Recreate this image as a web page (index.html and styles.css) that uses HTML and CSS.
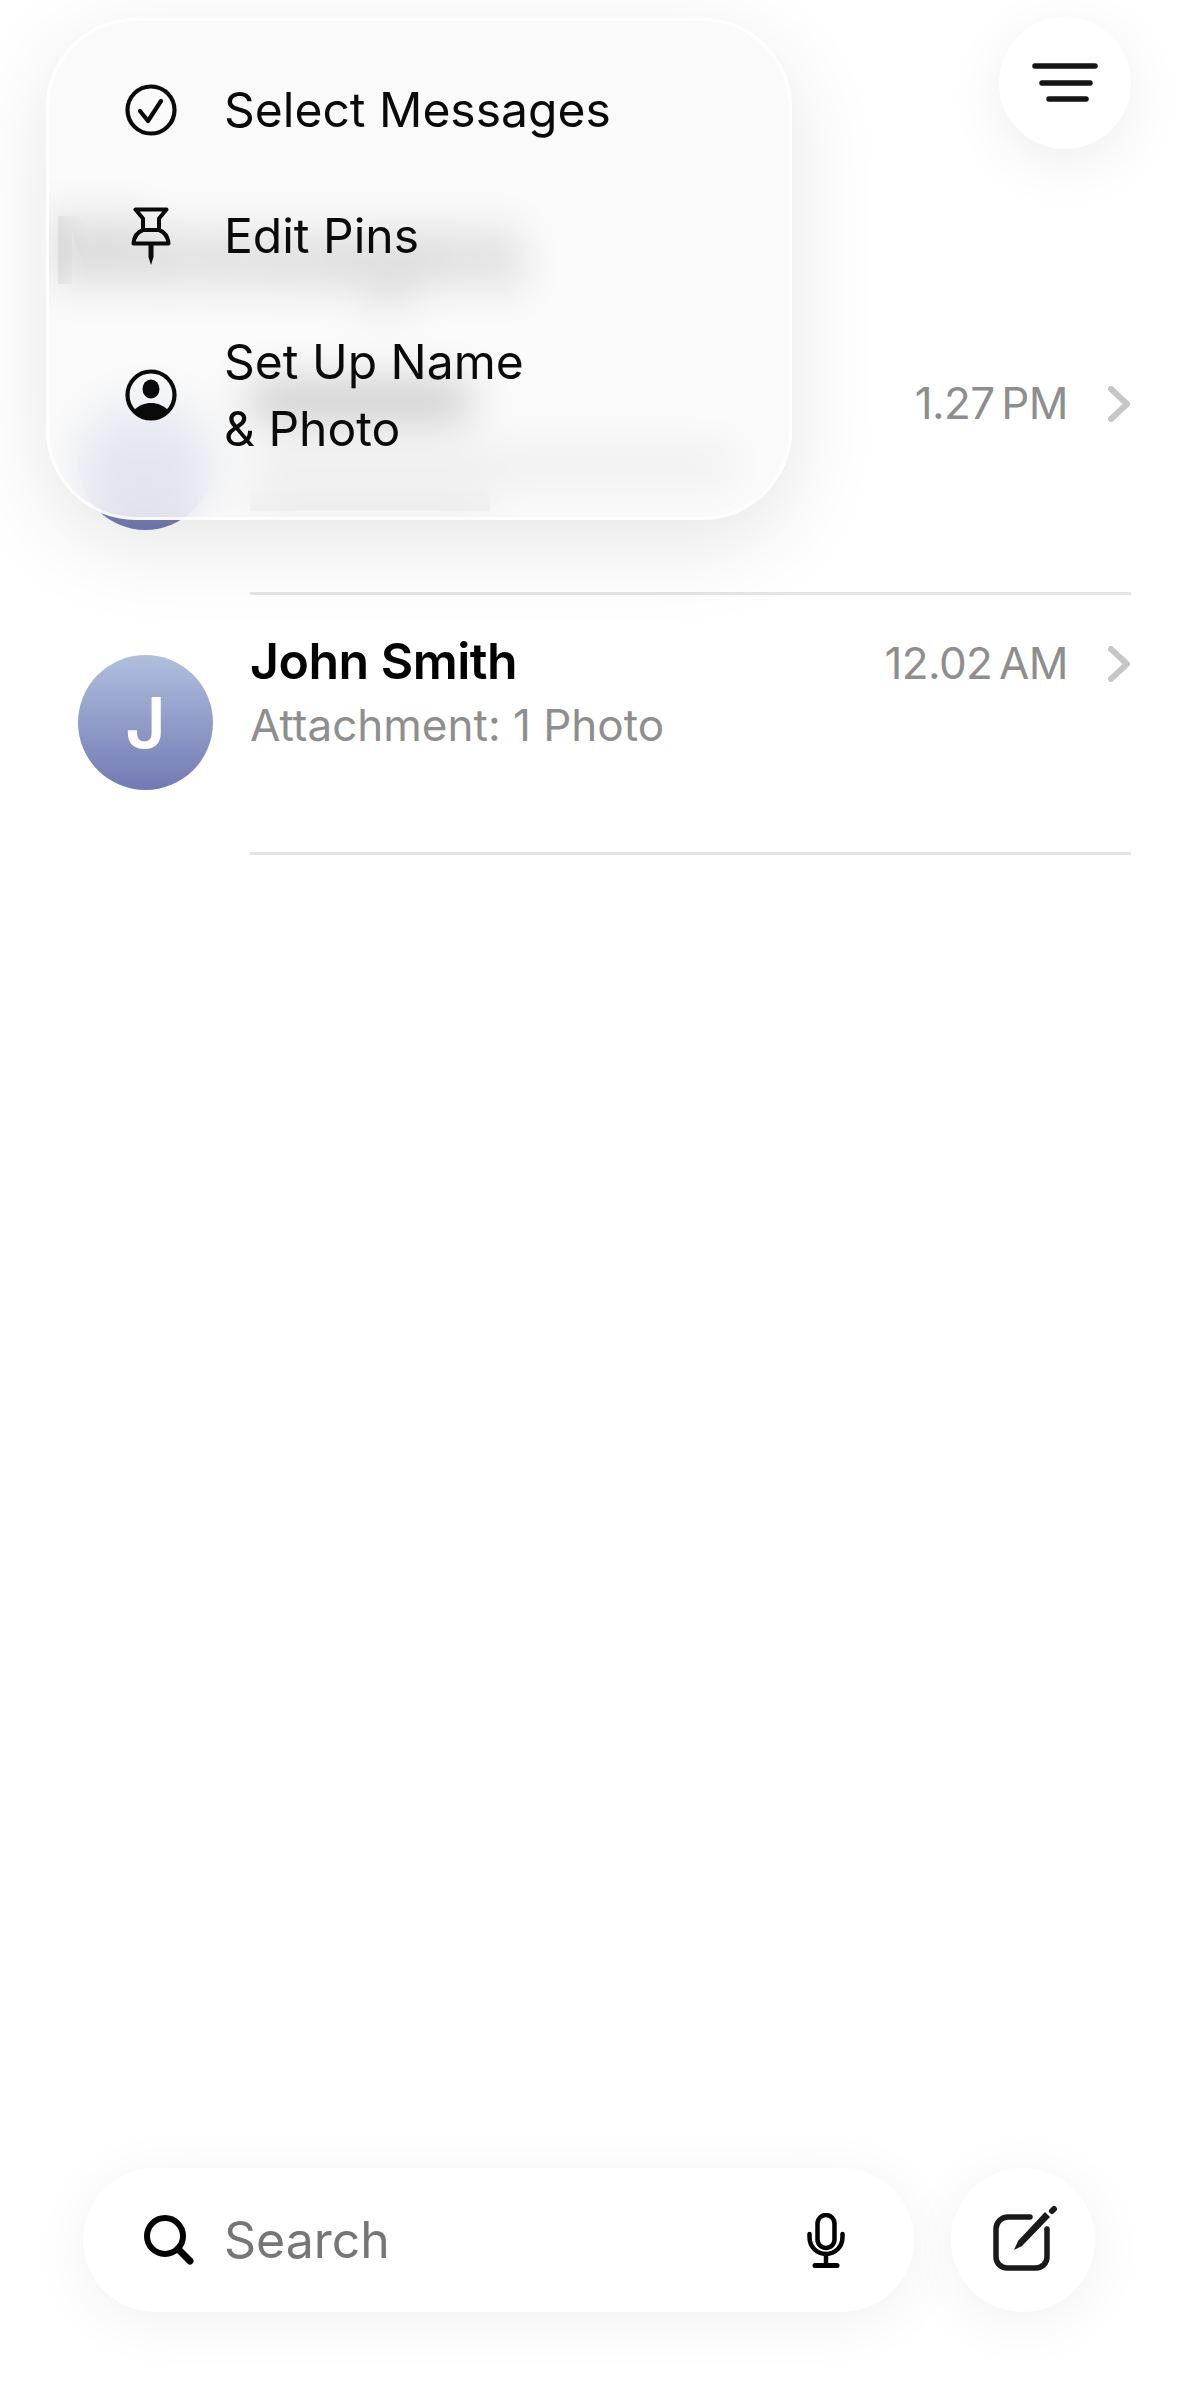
FILE: index.html
```html
<html>
  <head>
    <title>Messages</title>
    <link rel="stylesheet" href="styles.css">
  </head>
  <body>
    <div class="app">
      <div class="topbar">
        <div class="filter-btn">
          <svg width="66" height="40" viewBox="0 0 66 40" fill="none" stroke="#151515" stroke-width="5.5" stroke-linecap="round">
            <path d="M3 3H63M10 20H58M17 36H54"/>
          </svg>
        </div>
      </div>

      <h1 class="page-title">Messages</h1>

      <div class="list">
        <div class="row">
          <div class="avatar"></div>
          <div class="row-body">
            <div class="row-head">
              <div class="ghost-name"></div>
              <span class="time">1.27 PM</span>
              <svg class="chevron" width="22" height="36" viewBox="0 0 22 36" fill="none" stroke="#c6c6c8" stroke-width="6" stroke-linecap="round" stroke-linejoin="round">
                <path d="M3 3L19 18L3 33"/>
              </svg>
            </div>
            <div class="ghost-line"></div>
            <div class="ghost-line short"></div>
          </div>
        </div>

        <div class="row">
          <div class="avatar">J</div>
          <div class="row-body">
            <div class="row-head">
              <span class="name">John Smith</span>
              <span class="time">12.02 AM</span>
              <svg class="chevron" width="22" height="36" viewBox="0 0 22 36" fill="none" stroke="#c6c6c8" stroke-width="6" stroke-linecap="round" stroke-linejoin="round">
                <path d="M3 3L19 18L3 33"/>
              </svg>
            </div>
            <div class="preview">Attachment: 1 Photo</div>
          </div>
        </div>
      </div>

      <div class="bottombar">
        <div class="search">
          <svg class="search-icon" width="50" height="50" viewBox="0 0 50 50" fill="none" stroke="#000" stroke-linecap="round">
            <circle cx="21" cy="21" r="18" stroke-width="6"/>
            <path d="M34 34L46 46" stroke-width="7"/>
          </svg>
          <span class="search-text">Search</span>
          <svg class="mic" width="38" height="55" viewBox="0 0 38 55" fill="none" stroke="#000" stroke-linecap="round">
            <rect x="10.5" y="2" width="17" height="33" rx="8.5" stroke-width="4.5"/>
            <path d="M2.5 21V24C2.5 34 10 41 19 41C28 41 35.5 34 35.5 24V21" stroke-width="4.5"/>
            <path d="M19 41V52" stroke-width="4.5"/>
            <path d="M8 52.5H30" stroke-width="5"/>
          </svg>
        </div>
        <div class="compose">
          <svg class="compose-icon" width="66" height="66" viewBox="0 0 66 66" fill="none" stroke="#1a1a1a" stroke-linecap="round">
            <path d="M37 12H15A12 12 0 0 0 3 24V52A11 11 0 0 0 14 63H43A11 11 0 0 0 54 52V24" stroke-width="5.5"/>
            <path d="M21 45L25 36L52 7L57 12L29 41Z" fill="#1a1a1a" stroke="none"/>
            <path d="M59 6L61 4" stroke-width="6"/>
          </svg>
        </div>
      </div>

      <!-- popup menu sits over the list -->
      <div class="menu">
        <div class="menu-item">
          <svg width="52" height="52" viewBox="0 0 52 52" fill="none" stroke="#0a0a0a" stroke-linecap="round" stroke-linejoin="round">
            <circle cx="26" cy="26" r="23.5" stroke-width="4.2"/>
            <path d="M15 27L23 37L36 17" stroke-width="4.2"/>
          </svg>
          <span>Select Messages</span>
        </div>
        <div class="menu-item">
          <svg width="52" height="58" viewBox="0 0 52 58" fill="none" stroke="#0a0a0a" stroke-width="4" stroke-linejoin="round">
            <path d="M10.5 2.5H41.5L34 11.5V23C39.5 25 43 30 43.5 36.5H8.5C9 30 12.5 25 18 23V11.5Z"/>
            <path d="M18 23H34"/>
            <path d="M23.5 38H28.5V50L26 58L23.5 50Z" fill="#0a0a0a" stroke="none"/>
          </svg>
          <span>Edit Pins</span>
        </div>
        <div class="menu-item">
          <svg width="52" height="52" viewBox="0 0 52 52" fill="none" stroke="#0a0a0a">
            <circle cx="26" cy="26" r="23.5" stroke-width="4.2"/>
            <ellipse cx="26" cy="20" rx="8.5" ry="9.5" fill="#0a0a0a" stroke="none"/>
            <path d="M8 42C14 36 20 34 26 34C32 34 38 36 44 42C39 48 32 50 26 50C20 50 13 48 8 42Z" fill="#0a0a0a" stroke="none"/>
          </svg>
          <span>Set Up Name<br>&amp; Photo</span>
        </div>
      </div>
    </div>
  </body>
</html>
```

FILE: styles.css
```css
body {
  margin: 0;
  background: #fff;
  font-family: Inter, "Liberation Sans", sans-serif;
  color: #000;
}

.app {
  position: relative;
  display: flex;
  flex-direction: column;
  height: 2396px;
  overflow: hidden;
}

.topbar {
  display: flex;
  justify-content: flex-end;
  padding: 17px 48px 0 0;
}

.filter-btn {
  display: flex;
  align-items: center;
  justify-content: center;
  width: 132px;
  height: 132px;
  border-radius: 50%;
  background: #fff;
  box-shadow: 0 14px 60px rgba(0, 0, 0, 0.07);
}

.page-title {
  margin: 51px 0 0 52px;
  font-size: 94px;
  line-height: 100px;
  font-weight: 700;
}

.list {
  margin-top: 35px;
}

.row {
  display: flex;
  gap: 37px;
  height: 260px;
  padding: 0 48px 0 78px;
  box-sizing: border-box;
}

.avatar {
  flex: none;
  display: flex;
  align-items: center;
  justify-content: center;
  width: 135px;
  height: 135px;
  margin-top: 60px;
  border-radius: 50%;
  background: linear-gradient(#afc0de, #7379b3);
  color: #fff;
  font-size: 70px;
  font-weight: 600;
}

.row-body {
  flex: 1;
  padding-top: 36px;
  border-bottom: 3px solid #e5e5e5;
}

.row-head {
  display: flex;
  align-items: center;
  height: 60px;
}

.name {
  font-size: 50px;
  line-height: 60px;
  font-weight: 600;
  letter-spacing: -0.5px;
}

.time {
  margin-left: auto;
  margin-top: 4px;
  font-size: 44px;
  color: #8e8e8e;
  letter-spacing: -0.6px;
  word-spacing: -5px;
}

.chevron {
  margin: 5px 1px 0 40px;
}

.preview {
  margin-top: 7px;
  font-size: 44px;
  line-height: 54px;
  color: #8e8e8e;
}

.ghost-name {
  width: 220px;
  height: 36px;
  background: #000;
}

.ghost-line {
  width: 480px;
  height: 24px;
  margin-top: 22px;
  background: #a8a8a8;
}

.ghost-line.short {
  width: 240px;
  height: 20px;
  margin-top: 14px;
}

.bottombar {
  display: flex;
  gap: 37px;
  margin-top: auto;
  padding: 0 84px 84px 83px;
}

.search {
  flex: 1;
  display: flex;
  align-items: center;
  height: 144px;
  padding: 0 69px 0 61px;
  border-radius: 72px;
  background: #fff;
  box-shadow: 0 10px 60px rgba(0, 0, 0, 0.06);
}

.search-text {
  margin-left: 30px;
  font-size: 50px;
  color: #767676;
}

.mic {
  margin-left: auto;
}

.compose {
  flex: none;
  display: flex;
  align-items: center;
  justify-content: center;
  width: 144px;
  height: 144px;
  border-radius: 50%;
  background: #fff;
  box-shadow: 0 10px 60px rgba(0, 0, 0, 0.06);
}

.compose-icon {
  margin: 0 0 4px 6px;
}

.menu {
  position: absolute;
  left: 46px;
  top: 18px;
  box-sizing: border-box;
  width: 746px;
  height: 502px;
  padding: 55px 0 0 76px;
  border: 3px solid rgba(255, 255, 255, 0.75);
  border-radius: 90px;
  background: rgba(249, 249, 249, 0.8);
  backdrop-filter: blur(22px);
  box-shadow: 0 24px 90px rgba(0, 0, 0, 0.1);
}

.menu-item {
  display: flex;
  align-items: center;
  gap: 47px;
  margin-bottom: 59px;
  font-size: 48px;
  line-height: 67px;
  color: #0a0a0a;
}
```
